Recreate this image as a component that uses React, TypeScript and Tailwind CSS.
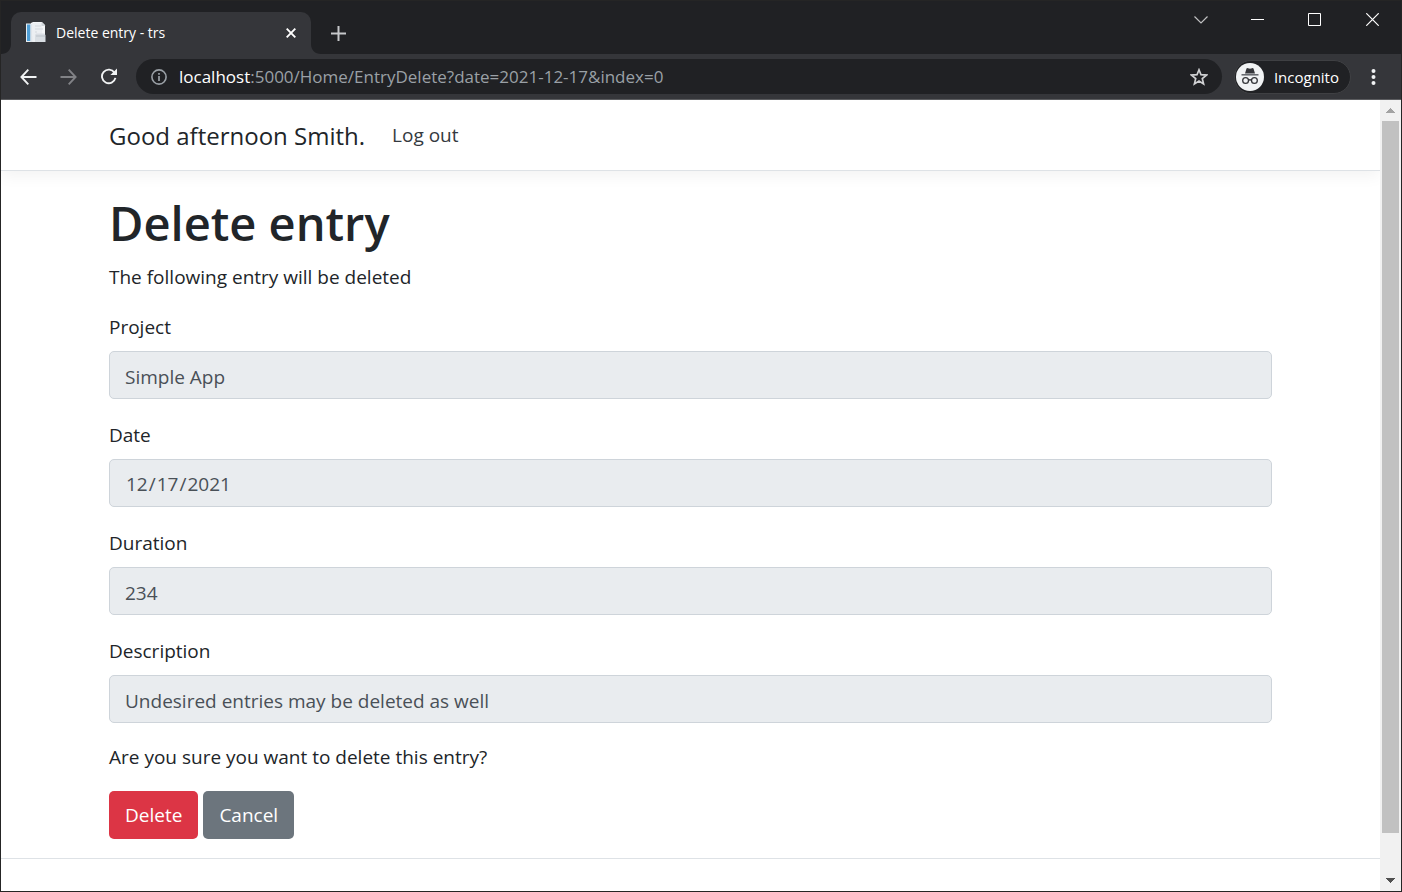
import React from "react";

function CaretUp() {
  return (
    <svg width="9" height="5" viewBox="0 0 9 5" className="block" aria-hidden="true" shapeRendering="crispEdges">
      <path d="M0 5L4.5 0L9 5Z" fill="#a3a3a3" />
    </svg>
  );
}

function CaretDown() {
  return (
    <svg width="9" height="5" viewBox="0 0 9 5" className="block" aria-hidden="true" shapeRendering="crispEdges">
      <path d="M0 0L4.5 5L9 0Z" fill="#505050" />
    </svg>
  );
}

function Favicon() {
  return (
    <svg width="22" height="22" viewBox="0 0 22 22" className="block shrink-0" aria-hidden="true">
      <path d="M1 1.500H8V20H1Z" fill="#e9eef2" />
      <path d="M2 2.500H5.500V19H2Z" fill="#4f9fd6" />
      <path d="M6 1L8 0H17L20 3V14H6Z" fill="#f4f6f8" />
      <path d="M5.500 2H7.500V20H5.500Z" fill="#dfe5ea" />
      <path d="M7.500 1H17V20H7.500Z" fill="#eceff2" />
      <path d="M10 4H16M10 7H18M10 10H12" stroke="#d3d8dd" />
      <path d="M16.500 0L20.500 4H16.500Z" fill="#cfd5da" />
      <path d="M11 11.500H19L20.500 13V20H10V13Z" fill="#d9dee3" />
      <path d="M11 14H20" stroke="#bcc3ca" />
    </svg>
  );
}

function TabStrip() {
  return (
    <div className="flex h-[53px] items-start justify-between bg-[#202124]">
      <div className="flex h-full items-end">
        <svg width="10" height="10" viewBox="0 0 10 10" className="block" aria-hidden="true">
          <path d="M0 10C6 10 10 6 10 0V10Z" fill="#35363a" />
        </svg>
        <div className="flex h-[42px] w-[300px] items-center rounded-t-[10px] bg-[#35363a] pl-[14px] pr-3">
          <Favicon />
          <span className="ml-[9px] flex-1 text-sm text-white">Delete entry - trs</span>
          <button type="button" aria-label="Close tab" className="flex size-4 items-center justify-center">
            <svg width="10" height="10" viewBox="0 0 10 10" aria-hidden="true">
              <path d="M0.700 0.700L9.300 9.300M9.300 0.700L0.700 9.300" stroke="#fff" strokeWidth="1.900" />
            </svg>
          </button>
        </div>
        <svg width="10" height="10" viewBox="0 0 10 10" className="block" aria-hidden="true">
          <path d="M10 10C4 10 0 6 0 0V10Z" fill="#35363a" />
        </svg>
        <button type="button" aria-label="New tab" className="ml-[10px] flex h-[42px] items-center">
          <svg width="15" height="15" viewBox="0 0 15 15" aria-hidden="true">
            <path d="M7.500 0V15M0 7.500H15" stroke="#c6c8ca" strokeWidth="2" />
          </svg>
        </button>
      </div>
      <div className="flex h-[37px] items-center">
        <button type="button" aria-label="Search tabs" className="flex w-[57px] justify-center">
          <svg width="14" height="8" viewBox="0 0 14 8" aria-hidden="true">
            <path d="M0.500 0.500L7 7L13.500 0.500" fill="none" stroke="#c0c1c2" strokeWidth="1.200" />
          </svg>
        </button>
        <button type="button" aria-label="Minimize" className="flex w-[57px] justify-center">
          <svg width="13" height="13" viewBox="0 0 13 13" aria-hidden="true">
            <path d="M0 6.500H13" stroke="#fff" />
          </svg>
        </button>
        <button type="button" aria-label="Maximize" className="flex w-[57px] justify-center">
          <svg width="13" height="13" viewBox="0 0 13 13" aria-hidden="true">
            <path d="M0.500 0.500H12.500V12.500H0.500Z" fill="none" stroke="#fff" />
          </svg>
        </button>
        <button type="button" aria-label="Close window" className="flex w-[58px] justify-center">
          <svg width="13" height="13" viewBox="0 0 13 13" aria-hidden="true">
            <path d="M0.300 0.300L12.700 12.700M12.700 0.300L0.300 12.700" stroke="#fff" strokeWidth="1.200" />
          </svg>
        </button>
      </div>
    </div>
  );
}

function Toolbar() {
  return (
    <div className="flex h-[46px] items-center border-b border-[#5b5c5f] bg-[#35363a] pl-[19px] pr-[25px]">
      <button type="button" aria-label="Back" className="w-10">
        <svg width="17" height="16" viewBox="0 0 17 16" className="block" aria-hidden="true">
          <path d="M8.300 0.700L1.400 8L8.300 15.300M1.400 8H16.500" fill="none" stroke="#f1f3f4" strokeWidth="1.900" />
        </svg>
      </button>
      <button type="button" aria-label="Forward" className="w-10">
        <svg width="17" height="16" viewBox="0 0 17 16" className="block" aria-hidden="true">
          <path d="M8.700 0.700L15.600 8L8.700 15.300M15.600 8H0.500" fill="none" stroke="#818286" strokeWidth="1.900" />
        </svg>
      </button>
      <button type="button" aria-label="Reload" className="w-9">
        <svg width="18" height="17" viewBox="0 0 19 18" className="block" aria-hidden="true">
          <path d="M15.300 5A7.200 7.200 0 1 0 16.300 10.500" fill="none" stroke="#f1f3f4" strokeWidth="2" />
          <path d="M18 0.500V7.500H11Z" fill="#f1f3f4" />
        </svg>
      </button>
      <div className="flex h-[35px] flex-1 items-center rounded-full bg-[#202124] pl-[15px] pr-[14px]">
        <svg width="16" height="16" viewBox="0 0 16 16" className="block shrink-0" aria-hidden="true">
          <circle cx="8" cy="8" r="7.100" fill="none" stroke="#9aa0a6" strokeWidth="1.600" />
          <path d="M8 7V12M8 4V5.700" stroke="#9aa0a6" strokeWidth="1.700" />
        </svg>
        <div className="ml-3 flex-1 whitespace-nowrap text-[17px] text-[#9aa0a6]">
          <span className="text-white">localhost</span>:5000/Home/EntryDelete?date=2021-12-17&amp;index=0
        </div>
        <button type="button" aria-label="Bookmark this tab">
          <svg width="18" height="18" viewBox="0 0 18 18" className="block" aria-hidden="true">
            <path d="M9 1.800L11 6.700L16.500 7.100L12.300 10.600L13.600 16L9 13.100L4.400 16L5.700 10.600L1.500 7.100L7 6.700Z" fill="none" stroke="#d0d1d3" strokeWidth="1.700" />
          </svg>
        </button>
      </div>
      <div className="ml-3 flex h-[34px] items-center rounded-full border border-[#3f4043] bg-[#202124] pl-px pr-[11px]">
        <svg width="28" height="28" viewBox="0 0 28 28" className="block" aria-hidden="true">
          <circle cx="14" cy="14" r="14" fill="#f1f3f4" />
          <path d="M9 10.500L10.500 5.500Q11 4.700 12 5.200L14 5.700L16 5.200Q17 4.700 17.500 5.500L19 10.500Z" fill="#35363a" />
          <path d="M5.500 11.800H22.500" stroke="#5f6368" strokeWidth="1.500" />
          <g fill="none" stroke="#35363a" strokeWidth="1.300">
            <circle cx="9.600" cy="17.500" r="2.900" />
            <circle cx="18.400" cy="17.500" r="2.900" />
            <path d="M12.500 17.300Q14 16.200 15.500 17.300" />
          </g>
        </svg>
        <span className="ml-[10px] text-[15px] leading-5 text-white">Incognito</span>
      </div>
      <button type="button" aria-label="Browser menu" className="ml-5">
        <svg width="5" height="18" viewBox="0 0 5 18" className="block" aria-hidden="true">
          <g fill="#f1f3f4">
            <circle cx="2.500" cy="3" r="2" />
            <circle cx="2.500" cy="9" r="2" />
            <circle cx="2.500" cy="15" r="2" />
          </g>
        </svg>
      </button>
    </div>
  );
}

const fields = [
  { id: "project", label: "Project", type: "text", value: "Simple App" },
  { id: "date", label: "Date", type: "date", value: "2021-12-17" },
  { id: "duration", label: "Duration", type: "text", value: "234" },
  { id: "description", label: "Description", type: "text", value: "Undesired entries may be deleted as well" },
];

export default function App() {
  return (
    <div className="flex h-screen flex-col overflow-hidden border border-[#252525] bg-white font-['Open_Sans','Noto_Sans',sans-serif] text-[#212529]">
      <TabStrip />
      <Toolbar />
      <div className="flex min-h-0 flex-1">
        <div className="min-w-0 flex-1 overflow-hidden text-[19px] leading-[29px]">
          <header className="border-b border-[#dee2e6] shadow-[0_5px_15px_rgba(0,0,0,0.05)]">
            <nav className="flex h-[70px] items-center px-[108px] pt-px">
              <a href="#home" className="text-2xl">Good afternoon Smith.</a>
              <a href="#logout" className="ml-[27px] text-[#343a40]">Log out</a>
            </nav>
          </header>
          <main className="px-[108px] pb-[19px] pt-[23px]">
            <h1 className="text-[47px] font-semibold leading-[58px]">Delete entry</h1>
            <p className="mt-[11px]">The following entry will be deleted</p>
            <form className="mt-[21px]">
              <div className="flex flex-col gap-[22px]">
                {fields.map((field) => (
                  <div key={field.id}>
                    <label htmlFor={field.id} className="mb-[9px] block">{field.label}</label>
                    <input
                      id={field.id}
                      type={field.type}
                      readOnly
                      defaultValue={field.value}
                      className="block h-12 w-full rounded-[5px] border border-[#ced4da] bg-[#e9ecef] px-[15px] pt-[3px] text-[#495057] [&::-webkit-calendar-picker-indicator]:hidden"
                    />
                  </div>
                ))}
              </div>
              <p className="mt-5">Are you sure you want to delete this entry?</p>
              <div className="mt-[19px] flex gap-[5px]">
                <button type="submit" className="h-12 rounded-[5px] bg-[#dc3545] px-4 pt-px text-white">Delete</button>
                <button type="button" className="h-12 rounded-[5px] bg-[#6c757d] px-4 pt-px text-white">Cancel</button>
              </div>
            </form>
          </main>
          <footer className="border-t border-[#dee2e6] px-[108px] py-[26px]">© 2021 - trs - Privacy</footer>
        </div>
        <div className="flex w-[21px] flex-col items-center bg-[#f1f1f1]" aria-hidden="true">
          <div className="flex h-[21px] items-center"><CaretUp /></div>
          <div className="h-[712px] w-[17px] bg-[#c1c1c1]" />
          <div className="flex flex-1 items-end pb-2"><CaretDown /></div>
        </div>
      </div>
    </div>
  );
}
